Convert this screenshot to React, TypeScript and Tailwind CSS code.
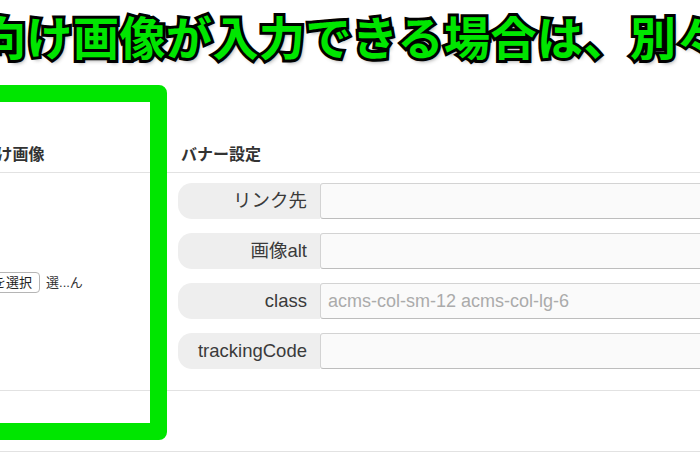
const rows = [
  { label: 'リンク先', placeholder: '' },
  { label: '画像alt', placeholder: '' },
  { label: 'class', placeholder: 'acms-col-sm-12 acms-col-lg-6' },
  { label: 'trackingCode', placeholder: '' },
]

export default function App() {
  return (
    <div className="relative w-[700px] h-[467px] overflow-hidden bg-white text-[#333] [font-family:'Liberation_Sans','Noto_Sans_CJK_JP',sans-serif]">
      {/* Annotation title */}
      <div className="h-[133px] pt-[12px]">
        <h1 className="ml-[-20px] whitespace-nowrap text-[46px] leading-none font-bold tracking-[0.5px] text-[#00e600] [font-family:'Noto_Sans_CJK_JP',sans-serif] [-webkit-text-stroke:6px_#000] [paint-order:stroke_fill] [text-shadow:2px_3px_4px_rgba(0,0,0,0.45)]">
          向け画像が入力できる場合は、別々
        </h1>
      </div>

      {/* Settings table */}
      <div className="ml-[-81px] w-[900px] grid grid-cols-[247px_1fr]">
        <div className="h-[40px] flex items-end pb-[5px] pl-[14px] border-b border-[#e2e2e2]">
          <span className="text-[16px] leading-[24px] font-bold">スマホ向け画像</span>
        </div>
        <div className="h-[40px] flex items-end pb-[5px] pl-[15px] border-b border-[#e2e2e2]">
          <span className="text-[16px] leading-[24px] font-bold">バナー設定</span>
        </div>

        <div className="h-[218px] pt-[99px] pl-[14px] border-b border-[#e2e2e2]">
          <div className="flex items-center gap-[6px] text-[13px]">
            <button className="h-[21px] px-[7px] leading-none border border-[#b5b5b5] rounded-[4px] bg-white text-[#222]">
              ファイルを選択
            </button>
            <span className="text-[#333]">選...ん</span>
          </div>
        </div>
        <div className="h-[218px] pt-[10px] pl-[12px] flex flex-col gap-[14px] border-b border-[#e2e2e2]">
          {rows.map((row) => (
            <div key={row.label} className="flex h-[36px]">
              <div className="w-[142px] shrink-0 flex items-center justify-end pr-[13px] rounded-l-[14px] bg-[#eeeeee] text-[18.5px] text-[#3a3a3a]">
                {row.label}
              </div>
              <input
                type="text"
                placeholder={row.placeholder}
                className="flex-1 h-[36px] px-[7px] border border-[#d3d3d3] border-b-[#bdbdbd] rounded-[3px] bg-[#fafafa] text-[18px] placeholder-[#ababab] outline-none"
              />
            </div>
          ))}
        </div>

        <div className="col-span-2 h-[61px] border-b border-[#e2e2e2]" />
      </div>

      {/* Green highlight box */}
      <div className="absolute left-[-20px] top-[85px] w-[187px] h-[355px] border-[17px] border-[#00e600] rounded-[8px]" />
    </div>
  )
}
